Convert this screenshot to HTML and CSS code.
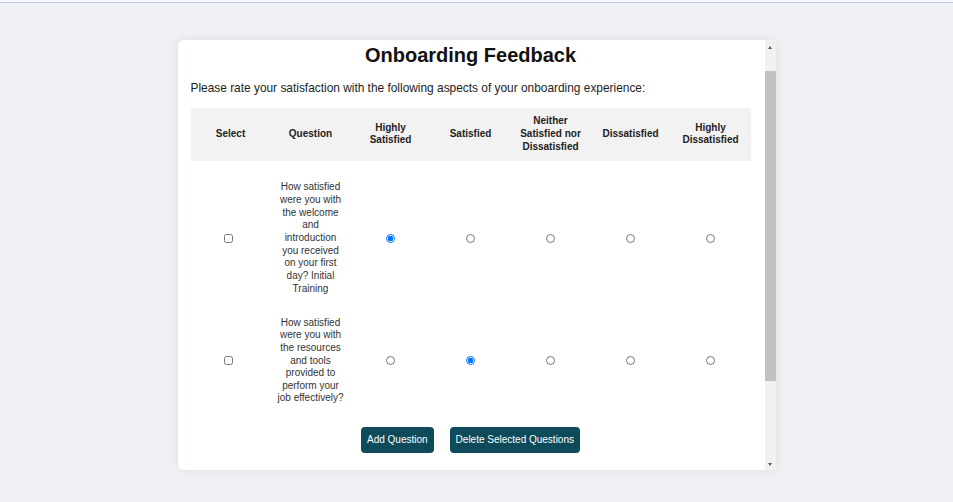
FILE: index.html
```html
<!DOCTYPE html>
<html lang="en">
<head>
<meta charset="utf-8">
<title>Onboarding Feedback</title>
<link rel="stylesheet" href="styles.css">
</head>
<body>
<div class="topbar"></div>
<div class="card">
  <main class="card-body">
    <h1 class="title">Onboarding Feedback</h1>
    <p class="intro">Please rate your satisfaction with the following aspects of your onboarding experience:</p>
    <table class="survey">
      <thead>
        <tr>
          <th>Select</th>
          <th>Question</th>
          <th>Highly Satisfied</th>
          <th>Satisfied</th>
          <th>Neither Satisfied nor Dissatisfied</th>
          <th>Dissatisfied</th>
          <th>Highly Dissatisfied</th>
        </tr>
      </thead>
      <tbody>
        <tr>
          <td><input type="checkbox" class="check"></td>
          <td class="question">How satisfied were you with the welcome and introduction you received on your first day? Initial Training</td>
          <td><input type="radio" class="radio" name="q1" checked></td>
          <td><input type="radio" class="radio" name="q1"></td>
          <td><input type="radio" class="radio" name="q1"></td>
          <td><input type="radio" class="radio" name="q1"></td>
          <td><input type="radio" class="radio" name="q1"></td>
        </tr>
        <tr>
          <td><input type="checkbox" class="check"></td>
          <td class="question">How satisfied were you with the resources and tools provided to perform your job effectively?</td>
          <td><input type="radio" class="radio" name="q2"></td>
          <td><input type="radio" class="radio" name="q2" checked></td>
          <td><input type="radio" class="radio" name="q2"></td>
          <td><input type="radio" class="radio" name="q2"></td>
          <td><input type="radio" class="radio" name="q2"></td>
        </tr>
      </tbody>
    </table>
    <div class="actions">
      <button class="btn" type="button">Add Question</button>
      <button class="btn" type="button">Delete Selected Questions</button>
    </div>
  </main>
  <div class="scrollbar" aria-hidden="true">
    <div class="sb-btn"><span class="arrow-up"></span></div>
    <div class="sb-track"><div class="sb-thumb"></div></div>
    <div class="sb-btn"><span class="arrow-down"></span></div>
  </div>
</div>
</body>
</html>
```

FILE: styles.css
```css
* { box-sizing: border-box; }

html, body {
  margin: 0;
  padding: 0;
}

body {
  background: #eef0f4;
  font-family: "Liberation Sans", Arial, sans-serif;
  color: #222;
  height: 502px;
  overflow: hidden;
}

.topbar {
  height: 3px;
  background: #f6f8fb;
  border-bottom: 1px solid #b7cfe2;
}

.card {
  display: flex;
  width: 598px;
  height: 430px;
  margin: 37px auto 0;
  background: #fff;
  border-radius: 6px 0 0 6px;
  box-shadow: 0 0 8px rgba(0, 0, 0, 0.07);
  overflow: hidden;
}

.card-body {
  flex: 1;
  min-width: 0;
  overflow: hidden;
  padding: 0 14px 0 13px;
}

.scrollbar {
  width: 11px;
  flex: none;
  display: flex;
  flex-direction: column;
  background: #f1f1f1;
}

.sb-btn {
  height: 14px;
  display: flex;
  align-items: center;
  justify-content: center;
}

.arrow-up {
  width: 0;
  height: 0;
  border-left: 2.5px solid transparent;
  border-right: 2.5px solid transparent;
  border-bottom: 3px solid #5a5a5a;
}

.arrow-down {
  width: 0;
  height: 0;
  margin-top: 2px;
  border-left: 2.5px solid transparent;
  border-right: 2.5px solid transparent;
  border-top: 3px solid #5a5a5a;
}

.sb-track {
  flex: 1;
}

.sb-thumb {
  margin-top: 17px;
  height: 310px;
  background: #c1c1c1;
}

.title {
  margin: 1px 0 0;
  text-align: center;
  font-size: 20px;
  font-weight: bold;
  color: #111;
  line-height: 28px;
}

.intro {
  margin: 11px 0 0;
  font-size: 11.9px;
  line-height: 16px;
  color: #222;
}

.survey {
  width: 560px;
  margin: 12px 0 0;
  border-collapse: collapse;
  table-layout: fixed;
}

.survey th {
  width: 80px;
  background: #f2f2f2;
  font-size: 10px;
  font-weight: bold;
  line-height: 12.6px;
  color: #222;
  padding: 7.4px 5.25px;
  text-align: center;
  vertical-align: middle;
}

.survey td {
  text-align: center;
  vertical-align: middle;
  padding: 10.7px 5.25px;
  font-size: 10px;
  line-height: 12.65px;
  color: #333;
}

.survey tbody tr:first-child td {
  padding-top: 20.7px;
}

.check {
  width: 9px;
  height: 9px;
  margin: 0 5px 0 0;
  vertical-align: middle;
}

.radio {
  width: 9px;
  height: 9px;
  margin: 0;
  vertical-align: middle;
}

.actions {
  display: flex;
  justify-content: center;
  gap: 16px;
  margin-top: 10.8px;
}

.btn {
  height: 26px;
  padding: 0 6px;
  border: none;
  border-radius: 4px;
  background: #0d4b5b;
  color: #fff;
  font-family: "Liberation Sans", Arial, sans-serif;
  font-size: 10px;
}
```
